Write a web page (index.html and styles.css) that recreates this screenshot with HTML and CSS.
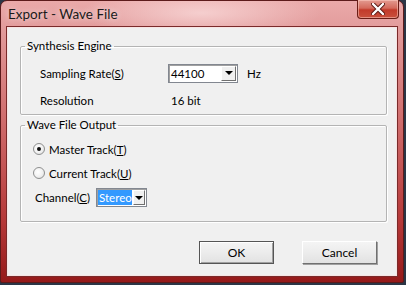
FILE: index.html
```html
<!DOCTYPE html>
<html lang="en">
<head>
    <meta charset="UTF-8">
    <title>Export - Wave File</title>
    <link rel="stylesheet" href="styles.css">
</head>
<body>
    <div class="window">
        <div class="titlebar">
            <span class="title">Export - Wave File</span>
            <button class="close-btn" title="Close">
                <svg width="14" height="12" viewBox="0 0 14 12">
                    <path d="M2 1 L12 11 M12 1 L2 11" stroke="#5a1a14" stroke-width="4.2" stroke-linecap="round"/>
                    <path d="M2 1 L12 11 M12 1 L2 11" stroke="#ffffff" stroke-width="2.4" stroke-linecap="round"/>
                </svg>
            </button>
        </div>
        <div class="client">
            <fieldset class="group group-engine">
                <legend>Synthesis Engine</legend>
                <div class="row row-rate">
                    <label class="field-label">Sampling Rate(<u>S</u>)</label>
                    <div class="combo combo-rate">
                        <span class="combo-value">44100</span>
                        <span class="combo-arrow"></span>
                    </div>
                    <span class="unit">Hz</span>
                </div>
                <div class="row row-res">
                    <span class="field-label">Resolution</span>
                    <span class="value">16 bit</span>
                </div>
            </fieldset>
            <fieldset class="group group-output">
                <legend>Wave File Output</legend>
                <label class="radio-row">
                    <span class="radio checked"></span>Master Track(<u>T</u>)
                </label>
                <label class="radio-row radio-second">
                    <span class="radio"></span>Current Track(<u>U</u>)
                </label>
                <div class="row row-channel">
                    <label class="channel-label">Channel(<u>C</u>)</label>
                    <div class="combo combo-channel">
                        <span class="combo-value selected">Stereo</span>
                        <span class="combo-arrow"></span>
                    </div>
                </div>
            </fieldset>
            <div class="buttons">
                <button class="btn btn-default">OK</button>
                <button class="btn">Cancel</button>
            </div>
        </div>
    </div>
</body>
</html>
```

FILE: styles.css
```css
body {
    margin: 0;
    background: #2b3646;
    font-family: Lato, "Noto Sans", sans-serif;
    font-size: 11.5px;
    color: #000;
}

.window {
    width: 404px;
    height: 283px;
    box-sizing: border-box;
    border: 1px solid #5c1b1b;
    border-radius: 7px 7px 2px 2px;
    background:
        radial-gradient(ellipse 120px 26px at 200px 12px, rgba(255, 235, 235, 0.6), rgba(255, 235, 235, 0) 100%),
        linear-gradient(to bottom, #eaa9a9 0, #e29b9b 28px, #cf6c6c 120px, #b53838 220px, #951a1a 100%);
    display: flex;
    flex-direction: column;
}

.titlebar {
    height: 27px;
    display: flex;
    align-items: flex-start;
}

.title {
    margin: 5px 0 0 7px;
    font-size: 13.5px;
    line-height: 16px;
    color: #1a1a1a;
    text-shadow: 0 0 6px rgba(255, 255, 255, 0.8);
}

.close-btn {
    margin: -1px 4px 0 auto;
    width: 42px;
    height: 19px;
    padding: 0;
    border: 1px solid #6a1d16;
    border-top: none;
    border-radius: 0 0 4px 4px;
    background: linear-gradient(to bottom, #e39b91 0, #d46a5c 45%, #c23a2a 55%, #c9503d 100%);
    box-shadow: inset 0 0 0 1px rgba(255, 210, 200, 0.5);
    display: flex;
    align-items: center;
    justify-content: center;
}

.client {
    margin: 0 7px;
    height: 247px;
    background: #f0f0f0;
    box-shadow: 0 0 0 1px #f7e4e4, 0 0 0 2px #7a2a2a;
    padding: 11px 9px 0 12px;
    box-sizing: border-box;
}

.group {
    margin: 0;
    padding: 0 0 5px 4px;
    border: 1px solid #b4b4b4;
    border-radius: 2px;
    box-shadow: 1px 1px 0 #fff, inset 1px 1px 0 #fff;
}

.group legend {
    padding: 0 2px;
    line-height: 14px;
}

.group-engine {
    padding-top: 10px;
}

.group-output {
    margin-top: 3px;
    padding-top: 8px;
    padding-bottom: 14px;
}

.row {
    display: flex;
    align-items: center;
    height: 20px;
}

.row-rate {
    margin-left: 15px;
}

.row-res {
    margin-left: 15px;
    margin-top: 8px;
    height: 18px;
}

.field-label {
    width: 128px;
}

.value {
    padding-left: 3px;
}

.unit {
    margin-left: 9px;
}

.combo {
    display: flex;
    height: 19px;
    box-sizing: border-box;
    background: #fff;
    border: 1px solid #828790;
    box-shadow: inset 1px 1px 0 #a0a0a0;
}

.combo-rate {
    width: 70px;
}

.combo-channel {
    width: 51px;
    margin-left: 6px;
}

.combo-value {
    flex: 1;
    padding-left: 2px;
    line-height: 17px;
}

.combo-value.selected {
    margin: 1px 0 1px 1px;
    padding-left: 1px;
    line-height: 15px;
    background: #3399ff;
    color: #fff;
}

.combo-arrow {
    width: 15px;
    margin: 1px;
    box-sizing: border-box;
    background: #f0f0f0;
    border: 1px solid;
    border-color: #fff #707070 #707070 #fff;
    display: flex;
    align-items: center;
    justify-content: center;
}

.combo-arrow::after {
    content: "";
    border-left: 4px solid transparent;
    border-right: 4px solid transparent;
    border-top: 4px solid #000;
}

.radio-row {
    margin-left: 8px;
    height: 18px;
    display: flex;
    align-items: center;
}

.radio-second {
    margin-top: 6px;
}

.radio {
    width: 12px;
    height: 12px;
    box-sizing: border-box;
    margin-right: 4px;
    border-radius: 50%;
    border: 1px solid #8e8f8f;
    background: radial-gradient(circle at 40% 40%, #ffffff 0, #f2f2f2 50%, #d8d8d8 100%);
    display: flex;
    align-items: center;
    justify-content: center;
}

.radio.checked::after {
    content: "";
    width: 4px;
    height: 4px;
    border-radius: 50%;
    background: #111;
}

.row-channel {
    margin-left: 10px;
    margin-top: 6px;
    height: 19px;
}

.buttons {
    display: flex;
    justify-content: flex-end;
    gap: 28px;
    margin-top: 19px;
    padding-right: 10px;
}

.btn {
    width: 75px;
    height: 23px;
    padding: 0;
    font-family: inherit;
    font-size: 12px;
    color: #000;
    background: linear-gradient(to bottom, #f4f4f4 0, #ececec 50%, #e2e2e2 100%);
    border: 1px solid;
    border-color: #fff #707070 #707070 #fff;
    box-shadow: 1px 1px 0 #a0a0a0;
}

.btn-default {
    border: 1px solid #555;
    box-shadow: inset 1px 1px 0 #fff, inset -1px -1px 0 #a0a0a0;
}
```
